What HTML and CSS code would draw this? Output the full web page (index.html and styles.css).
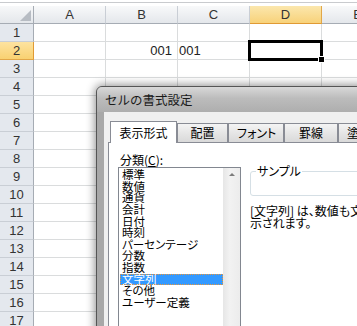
FILE: index.html
```html
<!DOCTYPE html>
<html lang="ja">
<head>
    <meta charset="UTF-8">
    <meta name="viewport" content="width=device-width, initial-scale=1.0">
    <title>セルの書式設定</title>
    <link rel="stylesheet" href="styles.css">
</head>
<body>
    <div class="sheet">
        <div class="formula-edge"></div>
        <div class="grid">
            <div class="row head">
                <div class="corner"></div>
                <div class="ch">A</div><div class="ch">B</div><div class="ch">C</div><div class="ch active">D</div><div class="ch">E</div>
            </div>
            <div class="row"><div class="rh">1</div><div class="c"></div><div class="c"></div><div class="c"></div><div class="c"></div><div class="c"></div></div>
            <div class="row"><div class="rh active">2</div><div class="c"></div><div class="c num">001</div><div class="c text">001</div><div class="c"></div><div class="c"></div></div>
            <div class="row"><div class="rh">3</div><div class="c"></div><div class="c"></div><div class="c"></div><div class="c"></div><div class="c"></div></div>
            <div class="row"><div class="rh">4</div><div class="c"></div><div class="c"></div><div class="c"></div><div class="c"></div><div class="c"></div></div>
            <div class="row"><div class="rh">5</div><div class="c"></div><div class="c"></div><div class="c"></div><div class="c"></div><div class="c"></div></div>
            <div class="row"><div class="rh">6</div><div class="c"></div><div class="c"></div><div class="c"></div><div class="c"></div><div class="c"></div></div>
            <div class="row"><div class="rh">7</div><div class="c"></div><div class="c"></div><div class="c"></div><div class="c"></div><div class="c"></div></div>
            <div class="row"><div class="rh">8</div><div class="c"></div><div class="c"></div><div class="c"></div><div class="c"></div><div class="c"></div></div>
            <div class="row"><div class="rh">9</div><div class="c"></div><div class="c"></div><div class="c"></div><div class="c"></div><div class="c"></div></div>
            <div class="row"><div class="rh">10</div><div class="c"></div><div class="c"></div><div class="c"></div><div class="c"></div><div class="c"></div></div>
            <div class="row"><div class="rh">11</div><div class="c"></div><div class="c"></div><div class="c"></div><div class="c"></div><div class="c"></div></div>
            <div class="row"><div class="rh">12</div><div class="c"></div><div class="c"></div><div class="c"></div><div class="c"></div><div class="c"></div></div>
            <div class="row"><div class="rh">13</div><div class="c"></div><div class="c"></div><div class="c"></div><div class="c"></div><div class="c"></div></div>
            <div class="row"><div class="rh">14</div><div class="c"></div><div class="c"></div><div class="c"></div><div class="c"></div><div class="c"></div></div>
            <div class="row"><div class="rh">15</div><div class="c"></div><div class="c"></div><div class="c"></div><div class="c"></div><div class="c"></div></div>
            <div class="row"><div class="rh">16</div><div class="c"></div><div class="c"></div><div class="c"></div><div class="c"></div><div class="c"></div></div>
            <div class="row"><div class="rh">17</div><div class="c"></div><div class="c"></div><div class="c"></div><div class="c"></div><div class="c"></div></div>
        </div>
        <div class="cursor"><span class="handle"></span></div>
    </div>

    <div class="dialog">
        <div class="titlebar">セルの書式設定</div>
        <div class="frame">
            <div class="client">
                <div class="tabs">
                    <div class="tab selected">表示形式</div>
                    <div class="tab w-align">配置</div>
                    <div class="tab w-font">フォント</div>
                    <div class="tab w-border">罫線</div>
                    <div class="tab w-fill">塗りつぶし</div>
                    <div class="tab">保護</div>
                </div>
                <div class="pane">
                    <div class="category">
                        <div class="label">分類(<u>C</u>):</div>
                        <div class="listbox">
                            <ul class="items">
                                <li>標準</li>
                                <li>数値</li>
                                <li>通貨</li>
                                <li>会計</li>
                                <li>日付</li>
                                <li>時刻</li>
                                <li>パーセンテージ</li>
                                <li>分数</li>
                                <li>指数</li>
                                <li class="selected">文字列</li>
                                <li>その他</li>
                                <li>ユーザー定義</li>
                            </ul>
                            <div class="scroll"><span class="arrow-up"></span></div>
                        </div>
                    </div>
                    <div class="detail">
                        <fieldset class="sample">
                            <legend>サンプル</legend>
                            <div class="sample-value"></div>
                        </fieldset>
                        <p class="desc">[文字列] は、数値も文字列として扱われます。セルには入力したとおりに表<br>示されます。</p>
                    </div>
                </div>
            </div>
        </div>
    </div>
</body>
</html>
```

FILE: styles.css
```css
* {
    box-sizing: border-box;
}

html, body {
    margin: 0;
    padding: 0;
    overflow: hidden;
}

body {
    width: 357px;
    height: 326px;
    position: relative;
    background-color: #fff;
    font-family: "Liberation Sans", Arial, sans-serif;
    color: #222;
}

/* spreadsheet */

.sheet {
    position: relative;
}

.formula-edge {
    height: 3px;
    border-bottom: 1px solid #c9cbce;
    margin-bottom: 3px;
}

.row {
    display: flex;
    height: 18px;
}

.corner, .rh {
    flex: none;
    width: 34px;
    background-color: #e4e8ee;
    border-right: 1px solid #a6acb4;
    border-bottom: 1px solid #c9ced5;
    text-align: center;
    font-size: 13px;
    line-height: 17px;
    color: #333;
}

.corner {
    position: relative;
    background: linear-gradient(#f7f8f9, #e4e7eb);
    border-bottom-color: #a6acb4;
}

.corner::after {
    content: "";
    position: absolute;
    right: 2px;
    bottom: 2px;
    border-left: 11px solid transparent;
    border-bottom: 11px solid #b7bcc3;
}

.c, .ch {
    flex: none;
    width: 72px;
    border-right: 1px solid #dadcdd;
    border-bottom: 1px solid #dadcdd;
    font-size: 13px;
    line-height: 17px;
}

.ch {
    background: linear-gradient(#f8f9fa, #e4e7eb);
    border-right-color: #c9ced5;
    border-bottom-color: #a6acb4;
    text-align: center;
    color: #333;
}

.ch.active {
    background: linear-gradient(#fbe7ad, #f8d27a);
    border-right-color: #e2a748;
    border-bottom-color: #e09a34;
}

.rh.active {
    background: linear-gradient(#fde3a0, #f9d171);
    border-right-color: #e09a34;
    border-bottom-color: #e2a748;
}

.c.num {
    text-align: right;
    padding-right: 5px;
}

.c.text {
    padding-left: 1px;
}

.cursor {
    position: absolute;
    left: 248px;
    top: 40px;
    width: 75px;
    height: 21px;
    border: 3px solid #000;
}

.handle {
    position: absolute;
    right: -5px;
    bottom: -5px;
    width: 7px;
    height: 7px;
    background-color: #000;
    border: 1px solid #fff;
}

/* dialog */

.dialog {
    position: absolute;
    left: 96px;
    top: 86px;
    width: 420px;
    height: 300px;
    border: 1px solid #555;
    border-radius: 6px 6px 0 0;
    background-color: #a8a8a8;
    box-shadow: 0 0 10px 1px rgba(0, 0, 0, 0.45);
    font-family: "Noto Sans CJK JP", sans-serif;
    color: #000;
}

.titlebar {
    height: 25px;
    padding-left: 8px;
    border-radius: 5px 5px 0 0;
    background: linear-gradient(#d8d8d8, #bcbcbc 45%, #aeaeae);
    font-size: 12.5px;
    line-height: 26px;
    color: #1a1a1a;
}

.frame {
    height: 100%;
    padding-left: 7px;
}

.client {
    height: 100%;
    padding: 9px 0 0 4px;
    background-color: #f0f0f0;
    font-size: 12px;
    font-feature-settings: "palt";
}

.tabs {
    position: relative;
    z-index: 1;
    display: flex;
    align-items: flex-end;
    height: 21px;
    padding-left: 2px;
}

.tab {
    flex: none;
    height: 19px;
    padding: 0 8px;
    border: 1px solid #898c95;
    border-bottom: none;
    background: linear-gradient(#f4f4f4, #e6e6e6 50%, #d9d9d9);
    line-height: 17px;
    text-align: center;
    white-space: nowrap;
}

.tab.selected {
    width: 67px;
    height: 22px;
    margin-bottom: -1px;
    background: #fff;
    line-height: 21px;
}

.w-align { width: 51px; }
.w-font { width: 56px; }
.w-border { width: 54px; }
.w-fill { width: 72px; }

.pane {
    display: flex;
    height: 220px;
    padding: 11px 0 0 9px;
    border: 1px solid #898c95;
    background-color: #fff;
}

.category {
    flex: none;
    width: 123px;
}

.label {
    height: 12px;
    margin-bottom: 1px;
    padding-left: 2px;
    line-height: 12px;
}

.listbox {
    display: flex;
    height: 200px;
    border: 1px solid #828790;
}

.items {
    flex: 1;
    margin: 0;
    padding: 1px 0 0 1px;
    list-style: none;
    font-size: 11.5px;
}

.items li {
    height: 11.64px;
    padding-left: 2px;
    line-height: 11.64px;
    white-space: nowrap;
}

.items li.selected {
    background-color: #3399ff;
    color: #fff;
    outline: 1px dotted #e8963a;
    outline-offset: -1px;
}

.scroll {
    position: relative;
    flex: none;
    width: 17px;
    background: linear-gradient(to right, #e6e6e6, #f2f2f2 40%, #ececec);
}

.arrow-up {
    position: absolute;
    left: 6px;
    top: 5px;
    border-left: 3px solid transparent;
    border-right: 3px solid transparent;
    border-bottom: 3px solid #7c7c7c;
}

.detail {
    flex: 1;
    min-width: 0;
    margin-left: 9px;
}

.sample {
    margin: 11px 0 0;
    padding: 0;
    min-width: 0;
    border: 1px solid #d5dfe5;
    border-radius: 3px;
}

.sample legend {
    margin-left: 5px;
    padding: 0 1px;
    line-height: 12px;
}

.sample-value {
    height: 18px;
}

.desc {
    margin: 9px 0 0;
    line-height: 12px;
    white-space: nowrap;
}
```
